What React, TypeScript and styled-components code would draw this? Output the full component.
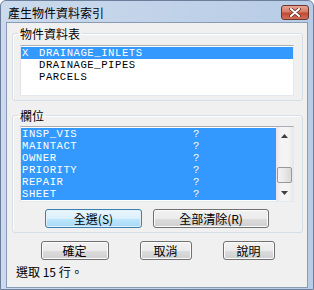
import styled, { createGlobalStyle } from "styled-components";

const GlobalStyle = createGlobalStyle`
  html, body {
    margin: 0;
    padding: 0;
    background: #ffffff;
  }
  body {
    font-family: "Noto Sans CJK TC", "Liberation Sans", sans-serif;
    font-size: 12px;
    color: #000;
  }
`;

const Window = styled.div`
  box-sizing: border-box;
  width: 314px;
  height: 290px;
  border: 1px solid #6b7f9b;
  border-radius: 6px 6px 0 0;
  background: linear-gradient(to right, #cbdaec, #b8cce6);
  padding: 0 5px 1px;
  display: flex;
  flex-direction: column;
`;

const TitleBar = styled.div`
  height: 21px;
  display: flex;
  align-items: flex-start;
  justify-content: space-between;
`;

const Title = styled.span`
  padding: 4px 0 0 2px;
  font-size: 12px;
  line-height: 15px;
`;

const CloseButton = styled.button`
  box-sizing: border-box;
  margin: 4px -1px 0 0;
  width: 28px;
  height: 15px;
  padding: 0;
  border: 1px solid #6e3530;
  border-radius: 3px;
  background: linear-gradient(#e7a594, #d67a66 45%, #c24a33 55%, #d07058);
  display: flex;
  align-items: center;
  justify-content: center;
`;

const Content = styled.div`
  flex: 1;
  border: 1px solid #8a9cb5;
  background: #f0f0f0;
  padding: 0 4px 0 5px;
  display: flex;
  flex-direction: column;
`;

const Group = styled.fieldset<{ $top: number }>`
  margin: ${(p) => p.$top}px 0 0;
  padding: ${(p) => (p.$top > 5 ? 4 : 5)}px 8px 4px 7px;
  border: 1px solid #d5dfe5;
  border-radius: 3px;
  box-shadow: inset 1px 1px 0 #fff;
  min-width: 0;
`;

const Legend = styled.legend`
  margin-left: -2px;
  padding: 0 2px;
  font-size: 12px;
  line-height: 13px;
`;

const List = styled.div<{ $h: number }>`
  box-sizing: border-box;
  height: ${(p) => p.$h}px;
  border: 1px solid #abadb3;
  border-right-color: #e3e9ef;
  border-bottom-color: #e3e9ef;
  border-left-color: #e2e3ea;
  background: #fff;
  display: flex;
  overflow: hidden;
`;

const Rows = styled.div`
  flex: 1;
  padding-top: 1px;
  font-family: "Liberation Mono", "Noto Sans CJK TC", monospace;
  font-size: 10.6px;
  letter-spacing: 0.55px;
`;

const Row = styled.div<{ $sel?: boolean }>`
  height: 12px;
  line-height: 12px;
  display: flex;
  align-items: center;
  padding-left: 1px;
  background: ${(p) => (p.$sel ? "#3399ff" : "transparent")};
  color: ${(p) => (p.$sel ? "#fff" : "#000")};
  white-space: pre;
`;

const Flag = styled.span`
  width: 17px;
`;

const NameCell = styled.span`
  width: 171px;
`;

const Scrollbar = styled.div`
  width: 17px;
  background: linear-gradient(to right, #e6e6e6, #f4f4f4 30%, #f4f4f4 70%, #e9e9e9);
  display: flex;
  flex-direction: column;
  align-items: center;
`;

const Arrow = styled.div`
  height: 17px;
  width: 17px;
  display: flex;
  align-items: center;
  justify-content: center;
`;

const Track = styled.div`
  flex: 1;
  display: flex;
  flex-direction: column;
  justify-content: flex-end;
  align-items: center;
  padding-bottom: 1px;
`;

const Thumb = styled.div`
  box-sizing: border-box;
  width: 15px;
  height: 16px;
  border: 1px solid #979797;
  border-radius: 2px;
  background: linear-gradient(to right, #f3f3f3, #e8e8e8 50%, #d9d9d9);
`;

const ButtonRow = styled.div<{ $gap: number; $top: number }>`
  display: flex;
  justify-content: center;
  gap: ${(p) => p.$gap}px;
  margin-top: ${(p) => p.$top}px;
`;

const Button = styled.button<{ $w: number; $focus?: boolean }>`
  box-sizing: border-box;
  width: ${(p) => p.$w}px;
  height: 19px;
  padding: 0;
  border: 1px solid ${(p) => (p.$focus ? "#3c7fb1" : "#707070")};
  border-radius: 3px;
  background: ${(p) =>
    p.$focus
      ? "linear-gradient(#eaf6fd, #d9f0fc 50%, #bee6fd 51%, #a7d9f5)"
      : "linear-gradient(#f2f2f2, #ebebeb 50%, #dddddd 51%, #cfcfcf)"};
  box-shadow: inset 0 0 0 1px ${(p) => (p.$focus ? "#dff2fc" : "#fcfcfc")};
  font-family: "Noto Sans CJK TC", "Liberation Sans", sans-serif;
  font-size: 12px;
  line-height: 15px;
  color: #000;
`;

const Status = styled.div`
  margin-top: 4px;
  padding-left: 4px;
  font-size: 12px;
  line-height: 15px;
`;

const tables = [
  { flag: "X", name: "DRAINAGE_INLETS", sel: true },
  { flag: "", name: "DRAINAGE_PIPES", sel: false },
  { flag: "", name: "PARCELS", sel: false },
];

const fields = ["INSP_VIS", "MAINTACT", "OWNER", "PRIORITY", "REPAIR", "SHEET"];

function App() {
  return (
    <>
      <GlobalStyle />
      <Window>
        <TitleBar>
          <Title>產生物件資料索引</Title>
          <CloseButton>
            <svg width="12" height="9" viewBox="0 0 12 9">
              <path
                d="M2 1 L10 8 M10 1 L2 8"
                stroke="#5a2a22"
                strokeWidth="3.4"
                strokeLinecap="round"
              />
              <path
                d="M2 1 L10 8 M10 1 L2 8"
                stroke="#fff"
                strokeWidth="2"
                strokeLinecap="round"
              />
            </svg>
          </CloseButton>
        </TitleBar>
        <Content>
          <Group $top={4}>
            <Legend>物件資料表</Legend>
            <List $h={51}>
              <Rows>
                {tables.map((t) => (
                  <Row key={t.name} $sel={t.sel}>
                    <Flag>{t.flag}</Flag>
                    <span>{t.name}</span>
                  </Row>
                ))}
              </Rows>
            </List>
          </Group>
          <Group $top={8}>
            <Legend>欄位</Legend>
            <List $h={76}>
              <Rows>
                {fields.map((f) => (
                  <Row key={f} $sel>
                    <NameCell>{f}</NameCell>
                    <span>?</span>
                  </Row>
                ))}
              </Rows>
              <Scrollbar>
                <Arrow>
                  <svg width="7" height="4" viewBox="0 0 7 4">
                    <path d="M3.5 0 L7 4 L0 4 Z" fill="#404040" />
                  </svg>
                </Arrow>
                <Track>
                  <Thumb />
                </Track>
                <Arrow>
                  <svg width="7" height="4" viewBox="0 0 7 4">
                    <path d="M0 0 L7 0 L3.5 4 Z" fill="#404040" />
                  </svg>
                </Arrow>
              </Scrollbar>
            </List>
            <ButtonRow $gap={11} $top={7}>
              <Button $w={97} $focus>
                全選(S)
              </Button>
              <Button $w={116}>全部清除(R)</Button>
            </ButtonRow>
          </Group>
          <ButtonRow $gap={31} $top={8}>
            <Button $w={68}>確定</Button>
            <Button $w={52}>取消</Button>
            <Button $w={52}>說明</Button>
          </ButtonRow>
          <Status>選取 15 行。</Status>
        </Content>
      </Window>
    </>
  );
}

export default App;
